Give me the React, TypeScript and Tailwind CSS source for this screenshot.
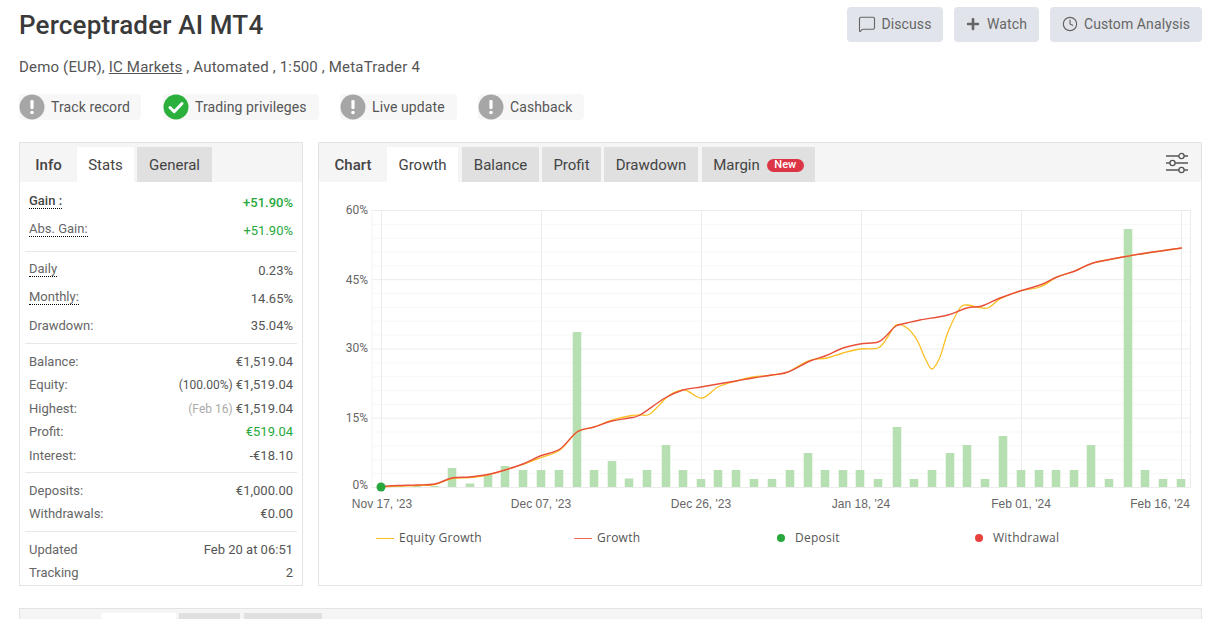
import React from 'react';
import { MessageSquare, Clock } from 'lucide-react';
import { FaPlus } from 'react-icons/fa';

type Pt = [number, number];

const growth: Pt[] = [[381, 486.5], [398, 485.5], [417, 485], [435, 484], [452, 478], [470, 477], [488, 474.5], [505, 470], [523, 464], [540, 456], [560, 449], [577, 432], [594, 427], [612, 421], [629, 418], [640, 415], [665, 398], [683, 390], [701, 387], [718, 384], [736, 381], [753, 378], [772, 375], [788, 372], [810, 361], [825, 356], [843, 348], [860, 344], [878, 342], [887, 335], [896, 326], [907, 323], [920, 320], [948, 315], [967, 308], [982, 306], [1000, 298], [1020, 291], [1040, 285], [1057, 277], [1075, 271], [1093, 263], [1123, 257], [1153, 252], [1182, 248]];

const equity: Pt[] = [[381, 487], [398, 486], [417, 485.5], [435, 484.5], [452, 478.5], [470, 477.5], [488, 475], [505, 470], [523, 464.5], [540, 458], [560, 450], [577, 432], [594, 427], [612, 420], [629, 416], [640, 415], [650, 414], [665, 399], [673, 393], [685, 390], [702, 398], [718, 387], [736, 381], [753, 377], [772, 375], [788, 372], [808, 361], [827, 358], [843, 353], [860, 349], [878, 348], [887, 338], [896, 325], [907, 328], [917, 340], [925, 358], [932, 369], [940, 357], [948, 332], [960, 308], [967, 305], [977, 307], [988, 308], [1000, 299], [1020, 291], [1040, 287], [1057, 277], [1075, 271], [1093, 263], [1123, 257], [1153, 252], [1182, 248]];

const bars: Pt[] = [[398, 2], [417, 2], [435, 1], [452, 19], [470, 3.5], [488, 12], [505, 21], [523, 17], [541, 17], [559, 17], [577, 155], [594, 17], [612, 26], [629, 8.5], [647, 17], [666, 42], [683, 17], [701, 8], [718, 17], [736, 17], [754, 8], [772, 8], [790, 17], [808, 34], [825, 17], [843, 17], [860, 17], [878, 8], [897, 60], [914, 8], [932, 17], [950, 34], [967, 42], [985, 8], [1003, 51], [1021, 17], [1039, 17], [1056, 17], [1074, 17], [1091, 42], [1109, 8], [1128, 258], [1145, 17], [1163, 8], [1181, 8]];

// catmull-rom through the sampled points
function smooth(pts: Pt[]) {
  let d = `M${pts[0][0]} ${pts[0][1]}`;
  for (let i = 0; i < pts.length - 1; i++) {
    const a = pts[Math.max(i - 1, 0)];
    const b = pts[i];
    const c = pts[i + 1];
    const e = pts[Math.min(i + 2, pts.length - 1)];
    d += ` C${b[0] + (c[0] - a[0]) / 6} ${b[1] + (c[1] - a[1]) / 6} ${c[0] - (e[0] - b[0]) / 6} ${c[1] - (e[1] - b[1]) / 6} ${c[0]} ${c[1]}`;
  }
  return d;
}

const majorY = [210.5, 279.7, 349, 418.2, 487.5];
const minorY = [0, 1, 2, 3].flatMap((i) => [1, 2, 3, 4].map((j) => majorY[i] + j * 13.84));
const gridX = [381, 541, 701, 861, 1021, 1181];
const yLabels: [string, number][] = [['60%', 210], ['45%', 280], ['30%', 348], ['15%', 418], ['0%', 485]];
const xLabels: [string, number][] = [["Nov 17, '23", 382], ["Dec 07, '23", 541], ["Dec 26, '23", 701], ["Jan 18, '24", 861], ["Feb 01, '24", 1021], ["Feb 16, '24", 1160]];

const Badge = ({ ok, label, className }: { ok?: boolean; label: string; className: string }) => (
  <div className={`flex items-center h-[26px] bg-[#f7f7f7] rounded-sm ${className}`}>
    <svg width="26" height="26" viewBox="0 0 26 26" className="shrink-0">
      <circle cx="13" cy="13" r="12.5" fill={ok ? '#2bb03e' : '#a6a6a6'} />
      {ok ? (
        <path d="M7 13.5l4.2 4.2L19 9.5" fill="none" stroke="#fff" strokeWidth="3" strokeLinecap="round" strokeLinejoin="round" />
      ) : (
        <>
          <rect x="11.4" y="6" width="3.2" height="9" rx="1.2" fill="#fff" />
          <circle cx="13" cy="18.5" r="1.8" fill="#fff" />
        </>
      )}
    </svg>
    <span className="ml-[6px] text-sm tracking-[0.1px] text-[#555]">{label}</span>
  </div>
);

interface RowProps {
  label: string;
  children: React.ReactNode;
  tall?: boolean;
  dotted?: boolean;
  bold?: boolean;
  green?: boolean;
  className?: string;
}

const Row = ({ label, children, tall, dotted, bold, green, className = '' }: RowProps) => (
  <div className={`flex justify-between items-center px-1 text-[13px] ${tall ? 'h-7' : 'h-[23.5px]'} ${bold ? 'font-medium' : ''} ${className}`}>
    <span className={`${dotted ? 'border-b border-dotted border-black leading-[14px] -mt-[4px]' : ''} ${bold ? 'text-[#444]' : 'text-[#666]'}`}>{label}</span>
    <span className={green ? 'text-[#28a83c]' : 'text-[#555]'}>{children}</span>
  </div>
);

const Tab = ({ label, active, className }: { label: string; active?: boolean; className: string }) => (
  <div className={`flex items-center justify-center h-[35px] pt-px text-[15px] text-[#444] ${active ? 'bg-white' : 'bg-[#e0e0e0]'} ${className}`}>
    {label}
  </div>
);

const App: React.FC = () => {
  return (
    <div className="h-[619px] w-[1227px] overflow-hidden bg-white pt-[7px] pl-[19px] pr-[25px] font-[Roboto,sans-serif]">
      <div className="flex justify-between items-center h-[35px]">
        <h1 className="text-[26px] font-medium tracking-[0.17px] text-[#3a3a3a] leading-none">Perceptrader AI MT4</h1>
        <div className="flex gap-[11px] text-sm tracking-[0.1px] text-[#666]">
          <button className="flex items-center justify-center gap-[5px] w-[96px] h-[35px] pb-px rounded-sm bg-[#e1e4ea]">
            <MessageSquare size={18} strokeWidth={1.5} />
            Discuss
          </button>
          <button className="flex items-center justify-center gap-[7px] w-[85px] h-[35px] pb-px rounded-sm bg-[#e1e4ea]">
            <FaPlus size={14} />
            Watch
          </button>
          <button className="flex items-center justify-center gap-[6px] w-[152px] h-[35px] pb-px rounded-sm bg-[#e1e4ea]">
            <Clock size={16} strokeWidth={1.75} />
            Custom Analysis
          </button>
        </div>
      </div>

      <div className="mt-[15px] h-5 leading-5 text-[15px] tracking-[0.17px] text-[#555]">
        Demo (EUR), <span className="underline">IC Markets</span> , Automated , 1:500 , MetaTrader 4
      </div>

      <div className="mt-[17px] flex">
        <Badge label="Track record" className="w-[122px]" />
        <Badge ok label="Trading privileges" className="ml-[22px] w-[156px]" />
        <Badge label="Live update" className="ml-[21px] w-[117px]" />
        <Badge label="Cashback" className="ml-[21px] w-[106px]" />
      </div>

      <div className="mt-[22px] flex gap-[15px] h-[444px]">
        <div className="w-[284px] shrink-0 border border-[#e3e3e3]">
          <div className="flex items-end h-[39px] bg-[#f5f5f5]">
            <div className="w-[57px] h-[35px] pt-px flex items-center justify-center text-[15px] font-medium text-[#444]">Info</div>
            <Tab label="Stats" active className="w-[57px]" />
            <Tab label="General" className="ml-[3px] w-[75px]" />
          </div>
          <div className="px-[5px]">
            <div className="pt-[7px] pb-[6px] border-b border-[#e8e8e8]">
              <Row tall dotted bold green label="Gain :">+51.90%</Row>
              <Row tall dotted green label="Abs. Gain:">+51.90%</Row>
            </div>
            <div className="pt-[5px] pb-[3px] border-b border-[#e8e8e8]">
              <Row tall dotted label="Daily">0.23%</Row>
              <Row tall dotted label="Monthly:">14.65%</Row>
              <Row tall label="Drawdown:" className="-mt-px">35.04%</Row>
            </div>
            <div className="pt-[5.5px] pb-[5px] border-b border-[#e8e8e8]">
              <Row label="Balance:">€1,519.04</Row>
              <Row label="Equity:"><span className="text-xs">(100.00%)</span> €1,519.04</Row>
              <Row label="Highest:"><span className="text-xs text-[#aaa]">(Feb 16)</span> €1,519.04</Row>
              <Row green label="Profit:">€519.04</Row>
              <Row label="Interest:">-€18.10</Row>
            </div>
            <div className="pt-[5.5px] pb-[5.5px] border-b border-[#e8e8e8]">
              <Row label="Deposits:">€1,000.00</Row>
              <Row label="Withdrawals:">€0.00</Row>
            </div>
            <div className="pt-[5.5px]">
              <Row label="Updated">Feb 20 at 06:51</Row>
              <Row label="Tracking">2</Row>
            </div>
          </div>
        </div>

        <div className="flex-1 border border-[#e3e3e3]">
          <div className="flex items-end h-[39px] bg-[#f5f5f5] relative">
            <div className="w-[68px] h-[35px] pt-px flex items-center justify-center text-[15px] font-medium text-[#444]">Chart</div>
            <Tab label="Growth" active className="w-[71px]" />
            <Tab label="Balance" className="ml-[4px] w-[77px]" />
            <Tab label="Profit" className="ml-[3px] w-[59px]" />
            <Tab label="Drawdown" className="ml-[3px] w-[94px]" />
            <div className="ml-[4px] w-[113px] h-[35px] pt-px flex items-center justify-center gap-[7px] bg-[#e0e0e0] text-[15px] text-[#444]">
              Margin
              <span className="h-[13px] w-[37px] flex items-center justify-center rounded-full bg-[#dc3545] text-[11px] font-medium text-white">New</span>
            </div>
            <svg width="24" height="22" viewBox="0 0 24 22" className="absolute right-[12px] top-[9px] text-[#555]" fill="none" stroke="currentColor" strokeWidth="1.3">
              <path d="M1 4h13M19 4h4M1 11h4M10 11h13M1 18h13M19 18h4" />
              <circle cx="16.5" cy="4" r="2.6" />
              <circle cx="7.5" cy="11" r="2.6" />
              <circle cx="16.5" cy="18" r="2.6" />
            </svg>
          </div>

          <svg width="882" height="340" viewBox="319 182 882 340" className="block">
            {minorY.map((y) => (
              <line key={y} x1="372" x2="1190" y1={y} y2={y} stroke="#f7f7f7" />
            ))}
            <line x1="372" x2="372" y1="210" y2="488" stroke="#f3f3f3" />
            <line x1="1190.5" x2="1190.5" y1="210" y2="488" stroke="#ececec" />
            {majorY.map((y) => (
              <line key={y} x1="372" x2="1190" y1={y} y2={y} stroke="#ececec" />
            ))}
            {gridX.map((x) => (
              <line key={x} x1={x + 0.5} x2={x + 0.5} y1="210" y2="488" stroke="#ececec" />
            ))}
            {bars.map(([x, h]) => (
              <rect key={x} x={x - 4.3} y={487 - h} width="8.6" height={h} fill="#b6e0b2" />
            ))}
            <path d={smooth(equity)} fill="none" stroke="#fbbf24" strokeWidth="1.3" />
            <path d={smooth(growth)} fill="none" stroke="#e8503a" strokeWidth="1.4" />
            <circle cx="381" cy="487" r="4.5" fill="#28a83c" />
            {yLabels.map(([t, y]) => (
              <text key={t} x="368" y={y + 4} textAnchor="end" className="font-[Roboto,sans-serif] text-xs" fill="#666">{t}</text>
            ))}
            {xLabels.map(([t, x]) => (
              <text key={t} x={x} y="508" textAnchor="middle" className="font-['Liberation_Sans',sans-serif] text-xs" fill="#666">{t}</text>
            ))}
          </svg>

          <div className="flex mt-[6px] pl-[57px] h-5 items-center text-xs tracking-[0.25px] text-[#555] font-['Open_Sans',sans-serif]">
            <div className="w-[198px] flex items-center gap-[5px]">
              <span className="w-[18px] h-px bg-[#fbbf24]" />
              Equity Growth
            </div>
            <div className="w-[198px] flex items-center gap-[5px]">
              <span className="w-[18px] h-px bg-[#ee6a5a]" />
              Growth
            </div>
            <div className="w-[198px] flex items-center gap-[10px] pl-[5px]">
              <span className="w-2 h-2 rounded-full bg-[#28a83c]" />
              Deposit
            </div>
            <div className="flex items-center gap-[10px] pl-[5px]">
              <span className="w-2 h-2 rounded-full bg-[#e8403a]" />
              Withdrawal
            </div>
          </div>
        </div>
      </div>

      <div className="mt-[22px] h-[40px] border border-[#e3e3e3] bg-[#f5f5f5] flex items-start pt-1 pl-[82px]">
        <div className="w-[74px] h-[35px] bg-white" />
        <div className="ml-[3px] w-[61px] h-[35px] bg-[#e0e0e0]" />
        <div className="ml-[4px] w-[78px] h-[35px] bg-[#e0e0e0]" />
      </div>
    </div>
  );
};

export default App;
